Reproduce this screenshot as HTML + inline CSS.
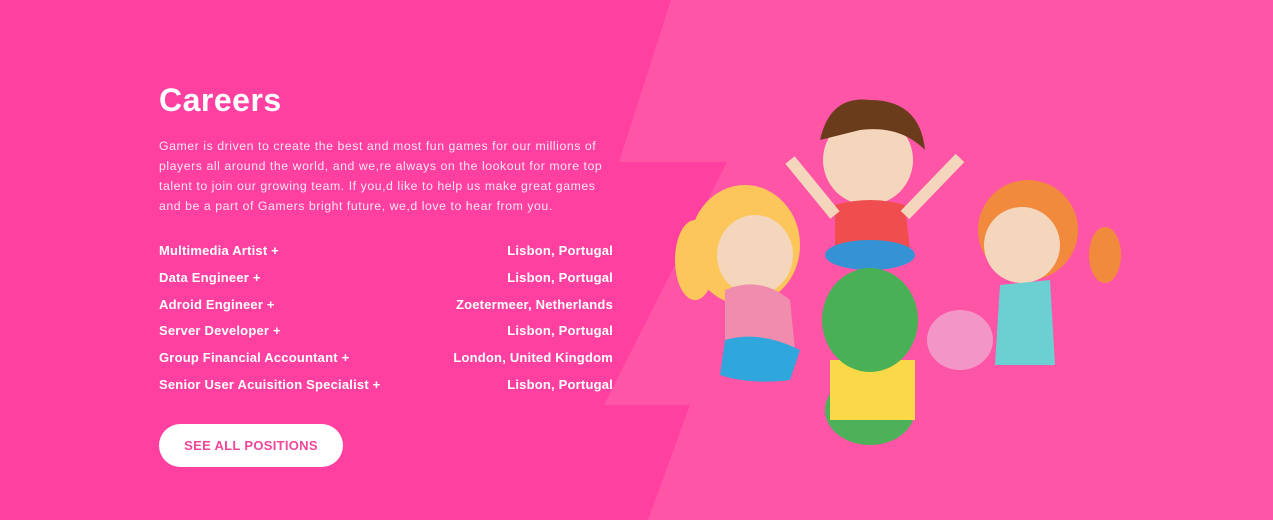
<!DOCTYPE html>
<html><head><meta charset="utf-8"><style>
body{margin:0;width:1273px;height:520px;overflow:hidden;background:#ff40a0;font-family:"Liberation Sans",sans-serif;position:relative}
svg.bg{position:absolute;left:0;top:0}
.c{position:absolute;left:159px;top:0;width:454px;color:#fff}
h1{position:absolute;top:82px;margin:0;font-size:32px;font-weight:bold;left:0;letter-spacing:0.5px}
p{position:absolute;top:136px;margin:0;font-size:12.3px;line-height:20px;width:470px;color:#ffe6f3;white-space:nowrap;letter-spacing:0.55px}
.row{position:absolute;left:0;width:454px;font-size:13px;font-weight:bold;display:flex;justify-content:space-between;letter-spacing:0.2px}
.btn{position:absolute;left:159px;top:424px;width:184px;height:43px;border-radius:22px;background:#fff;color:#f0479a;font-weight:bold;font-size:13px;display:flex;align-items:center;justify-content:center;letter-spacing:0.3px}
</style></head><body>
<svg class="bg" width="1273" height="520"><polygon points="671,0 1273,0 1273,520 648,520 690,405 604,405 727,162 619,162" fill="#ff55a6"/>
<g>
<ellipse cx="745" cy="245" rx="55" ry="60" fill="#fcc65a"/>
<ellipse cx="695" cy="260" rx="20" ry="40" fill="#fcc65a"/>
<ellipse cx="755" cy="255" rx="38" ry="40" fill="#f4d6bd"/>
<path d="M725 290 Q760 275 790 300 L795 350 Q760 365 725 345Z" fill="#f08cae"/>
<path d="M725 340 Q760 330 800 350 L790 380 Q750 385 720 375Z" fill="#2fa6dc"/>
<ellipse cx="868" cy="160" rx="45" ry="45" fill="#f4d6bd"/>
<path d="M820 140 Q830 95 870 100 Q920 100 925 150 Q900 125 860 130Z" fill="#6b3c1c"/>
<path d="M835 205 Q870 195 905 205 L910 250 L835 250Z" fill="#f04e4e"/>
<ellipse cx="870" cy="255" rx="45" ry="15" fill="#3592d4"/>
<path d="M790 160 L835 215" stroke="#f4d6bd" stroke-width="12"/>
<path d="M960 158 L905 215" stroke="#f4d6bd" stroke-width="12"/>
<ellipse cx="1028" cy="230" rx="50" ry="50" fill="#f28a3e"/>
<ellipse cx="1105" cy="255" rx="16" ry="28" fill="#f28a3e"/>
<ellipse cx="1022" cy="245" rx="38" ry="38" fill="#f4d6bd"/>
<path d="M1000 285 L1050 280 L1055 365 L995 365Z" fill="#6ccfd2"/>
<ellipse cx="870" cy="410" rx="45" ry="35" fill="#4db15a"/>
<path d="M830 360 L915 360 L915 420 L830 420Z" fill="#fbd847"/>
<ellipse cx="870" cy="320" rx="48" ry="52" fill="#4ab055"/>
<ellipse cx="960" cy="340" rx="33" ry="30" fill="#f495c8"/>
</g></svg>
<div class="c">
<h1>Careers</h1>
<p>Gamer is driven to create the best and most fun games for our millions of<br>players all around the world, and we,re always on the lookout for more top<br>talent to join our growing team. If you,d like to help us make great games<br>and be a part of Gamers bright future, we,d love to hear from you.</p>
<div class="row" style="top:243px"><span>Multimedia Artist +</span><span>Lisbon, Portugal</span></div>
<div class="row" style="top:270px"><span>Data Engineer +</span><span>Lisbon, Portugal</span></div>
<div class="row" style="top:297px"><span>Adroid Engineer +</span><span>Zoetermeer, Netherlands</span></div>
<div class="row" style="top:323px"><span>Server Developer +</span><span>Lisbon, Portugal</span></div>
<div class="row" style="top:350px"><span>Group Financial Accountant +</span><span>London, United Kingdom</span></div>
<div class="row" style="top:377px"><span>Senior User Acuisition Specialist +</span><span>Lisbon, Portugal</span></div>
</div>
<div class="btn">SEE ALL POSITIONS</div>
</body></html>
